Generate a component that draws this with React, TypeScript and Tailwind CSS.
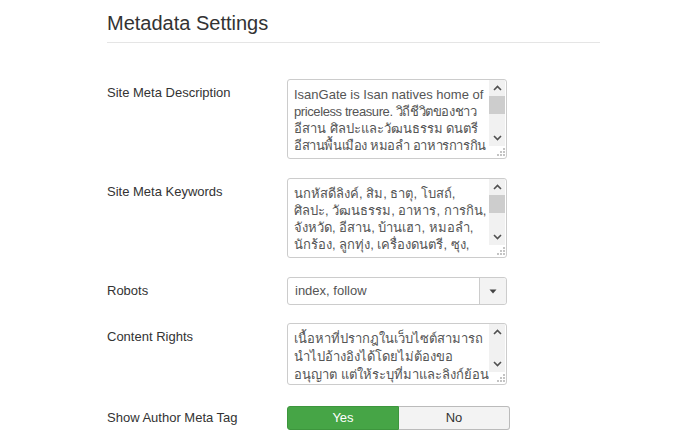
import React from "react";

// [text, tighten] - the Thai fallback font runs a bit wider than the original
const descLines: [string, boolean][] = [
  ["IsanGate is Isan natives home of", false],
  ["priceless treasure. วิถีชีวิตของชาว", true],
  ["อีสาน ศิลปะและวัฒนธรรม ดนตรี", false],
  ["อีสานพื้นเมือง หมอลำ อาหารการกิน", true],
];

const keywordLines: [string, boolean][] = [
  ["นกหัสดีลิงค์, สิม, ธาตุ, โบสถ์,", false],
  ["ศิลปะ, วัฒนธรรม, อาหาร, การกิน,", false],
  ["จังหวัด, อีสาน, บ้านเฮา, หมอลำ,", false],
  ["นักร้อง, ลูกทุ่ง, เครื่องดนตรี, ซุง,", false],
];

const rightsLines: [string, boolean][] = [
  ["เนื้อหาที่ปรากฎในเว็บไซต์สามารถ", false],
  ["นำไปอ้างอิงได้โดยไม่ต้องขอ", false],
  ["อนุญาต แต่ให้ระบุที่มาและลิงก์ย้อน", false],
];

const Chevron = ({ down }: { down?: boolean }) => (
  <svg width="9" height="6" viewBox="0 0 9 6">
    <polyline
      points={down ? "1,1 4.5,4.5 8,1" : "1,5 4.5,1.5 8,5"}
      fill="none"
      stroke="#505050"
      strokeWidth="1.6"
    />
  </svg>
);

const Grip = () => (
  <svg width="8" height="8" viewBox="0 0 8 8">
    <g fill="#c4c4c4">
      <rect x="6" y="0" width="2" height="2" />
      <rect x="3" y="3" width="2" height="2" />
      <rect x="6" y="3" width="2" height="2" />
      <rect x="0" y="6" width="2" height="2" />
      <rect x="3" y="6" width="2" height="2" />
      <rect x="6" y="6" width="2" height="2" />
    </g>
  </svg>
);

type AreaProps = { lines: [string, boolean][]; tall?: boolean; thumb?: boolean };

const FakeTextarea: React.FC<AreaProps> = ({ lines, tall, thumb }) => {
  return (
    <div className={`flex w-[220px] ${tall ? "h-[80px]" : "h-[62px]"} overflow-hidden rounded-[3px] border border-[#ccc] bg-white`}>
      <div className={`flex-1 overflow-hidden whitespace-nowrap pl-[6px] pt-[6px] text-[13px] text-[#555] ${tall ? "leading-[17px]" : "leading-[18px]"}`}>
        {lines.map(([l, tight], i) => (
          <div key={i} className={`${tall ? "h-[17px]" : "h-[18px]"} ${tight ? "tracking-[-0.4px]" : ""}`}>{l}</div>
        ))}
      </div>
      <div className="mr-px flex w-[16px] flex-col">
        <div className="flex flex-1 flex-col bg-[#f1f1f1]">
          <div className="flex h-[16px] items-center justify-center"><Chevron /></div>
          {thumb && <div className="h-[18px] bg-[#cdcdcd]" />}
          <div className="flex-1" />
          <div className="flex h-[16px] items-center justify-center"><Chevron down /></div>
        </div>
        <div className="flex h-[12px] items-end justify-end pb-[2px]">
          <Grip />
        </div>
      </div>
    </div>
  );
};

type RowProps = { label: string; rowClass: string; labelClass: string; children: React.ReactNode };

const Row: React.FC<RowProps> = ({ label, rowClass, labelClass, children }) => (
  <div className={`flex ${rowClass}`}>
    <div className={`w-[180px] shrink-0 text-[13px] leading-[18px] text-[#333] ${labelClass}`}>{label}</div>
    <div>{children}</div>
  </div>
);

export default function App() {
  return (
    <div className="min-h-[443px] bg-white font-['Liberation_Sans',Arial,sans-serif]">
      <div className="ml-[107px] w-[493px] pt-[11px]">
        <h2 className="border-b border-[#e5e5e5] pb-[7px] text-[20px] leading-[24px] text-[#333]">
          Metadata Settings
        </h2>
        <div className="mt-[36px] flex flex-col">
          <Row label="Site Meta Description" rowClass="mb-[19px]" labelClass="pt-[5px]">
            <FakeTextarea lines={descLines} tall thumb />
          </Row>
          <Row label="Site Meta Keywords" rowClass="mb-[19px]" labelClass="pt-[5px]">
            <FakeTextarea lines={keywordLines} tall thumb />
          </Row>
          <Row label="Robots" rowClass="mb-[18px]" labelClass="pt-[5px]">
            <div className="flex h-[28px] w-[220px] rounded-[3px] border border-[#ccc] bg-white">
              <div className="flex flex-1 items-center pl-[7px] text-[13px] text-[#555]">index, follow</div>
              <div className="flex w-[27px] items-center justify-center rounded-r-[3px] border-l border-[#ccc] bg-[#f3f3f3]">
                <svg width="8" height="5" viewBox="0 0 8 5">
                  <polygon points="0.5,0.5 7.5,0.5 4,4.5" fill="#444" />
                </svg>
              </div>
            </div>
          </Row>
          <Row label="Content Rights" rowClass="mb-[21px]" labelClass="pt-[5px]">
            <FakeTextarea lines={rightsLines} />
          </Row>
          <Row label="Show Author Meta Tag" rowClass="" labelClass="pt-[3px]">
            <div className="flex h-[24px] w-[223px] text-[13px]">
              <button className="flex w-[112px] items-center justify-center rounded-l-[3px] border border-[#3d963d] bg-[#46a546] text-white">
                Yes
              </button>
              <button className="flex flex-1 items-center justify-center rounded-r-[3px] border border-l-0 border-[#bbb] bg-[#f3f3f3] text-[#333]">
                No
              </button>
            </div>
          </Row>
        </div>
      </div>
    </div>
  );
}
